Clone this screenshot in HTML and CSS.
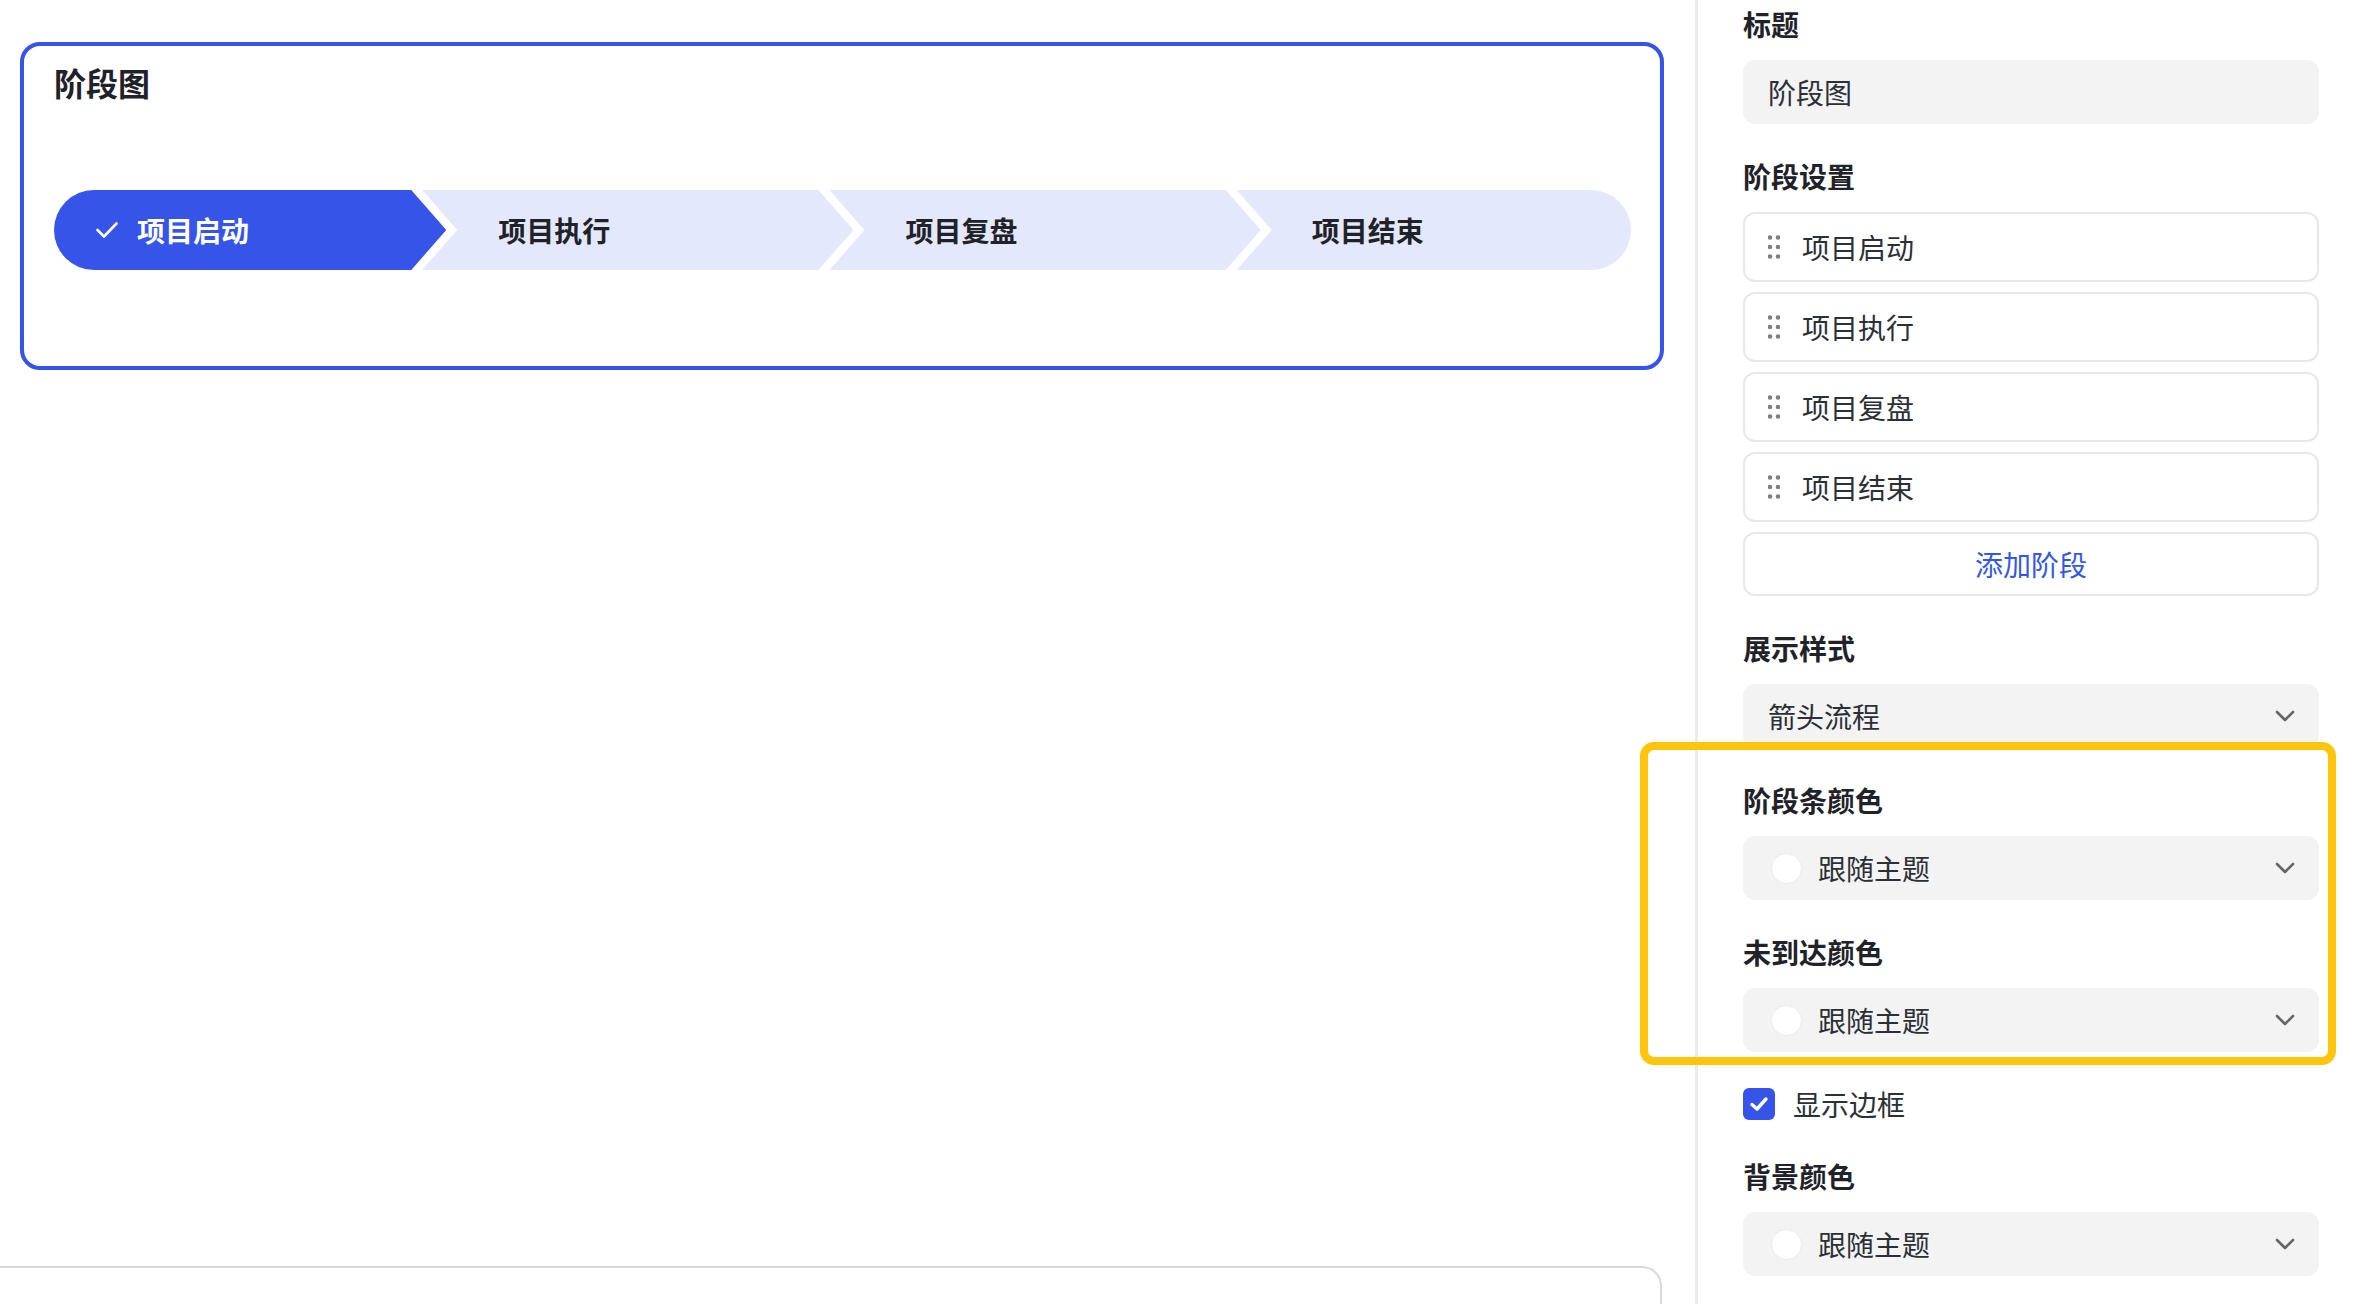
FILE: index.html
```html
<!DOCTYPE html>
<html lang="zh-CN">
<head>
<meta charset="utf-8">
<title>阶段图</title>
<link rel="stylesheet" href="styles.css">
</head>
<body>
<div class="app">
  <main class="canvas">
    <section class="card">
      <h2 class="card-title">阶段图</h2>
      <div class="stages">
        <div class="stage stage-first">
          <svg class="check" viewBox="0 0 22 16" width="22" height="16"><polyline points="1.5,8 8,14.5 20.5,1.5" fill="none" stroke="#fff" stroke-width="2.6" stroke-linecap="round" stroke-linejoin="round"/></svg>
          <span class="stage-text">项目启动</span>
        </div>
        <div class="stage stage-mid"><span class="stage-text">项目执行</span></div>
        <div class="stage stage-mid"><span class="stage-text">项目复盘</span></div>
        <div class="stage stage-last"><span class="stage-text">项目结束</span></div>
      </div>
    </section>
    <section class="card-next"></section>
  </main>

  <aside class="panel">
    <div class="field-label">标题</div>
    <div class="input">阶段图</div>

    <div class="field-label">阶段设置</div>
    <div class="stage-list">
      <div class="stage-item">
        <svg class="handle" viewBox="0 0 12 24" width="12" height="24"><circle cx="2" cy="2.5" r="2.3"/><circle cx="10" cy="2.5" r="2.3"/><circle cx="2" cy="12" r="2.3"/><circle cx="10" cy="12" r="2.3"/><circle cx="2" cy="21.5" r="2.3"/><circle cx="10" cy="21.5" r="2.3"/></svg>
        <span>项目启动</span>
      </div>
      <div class="stage-item">
        <svg class="handle" viewBox="0 0 12 24" width="12" height="24"><circle cx="2" cy="2.5" r="2.3"/><circle cx="10" cy="2.5" r="2.3"/><circle cx="2" cy="12" r="2.3"/><circle cx="10" cy="12" r="2.3"/><circle cx="2" cy="21.5" r="2.3"/><circle cx="10" cy="21.5" r="2.3"/></svg>
        <span>项目执行</span>
      </div>
      <div class="stage-item">
        <svg class="handle" viewBox="0 0 12 24" width="12" height="24"><circle cx="2" cy="2.5" r="2.3"/><circle cx="10" cy="2.5" r="2.3"/><circle cx="2" cy="12" r="2.3"/><circle cx="10" cy="12" r="2.3"/><circle cx="2" cy="21.5" r="2.3"/><circle cx="10" cy="21.5" r="2.3"/></svg>
        <span>项目复盘</span>
      </div>
      <div class="stage-item">
        <svg class="handle" viewBox="0 0 12 24" width="12" height="24"><circle cx="2" cy="2.5" r="2.3"/><circle cx="10" cy="2.5" r="2.3"/><circle cx="2" cy="12" r="2.3"/><circle cx="10" cy="12" r="2.3"/><circle cx="2" cy="21.5" r="2.3"/><circle cx="10" cy="21.5" r="2.3"/></svg>
        <span>项目结束</span>
      </div>
      <div class="add-btn">添加阶段</div>
    </div>

    <div class="field-label">展示样式</div>
    <div class="input select">
      <span class="select-text">箭头流程</span>
      <svg class="chevron" viewBox="0 0 20 12" width="20" height="12"><polyline points="2,2 10,10 18,2" fill="none" stroke="#666" stroke-width="2.6" stroke-linecap="round" stroke-linejoin="round"/></svg>
    </div>

    <div class="field-label">阶段条颜色</div>
    <div class="input select color-select">
      <span class="swatch"></span>
      <span class="select-text">跟随主题</span>
      <svg class="chevron" viewBox="0 0 20 12" width="20" height="12"><polyline points="2,2 10,10 18,2" fill="none" stroke="#666" stroke-width="2.6" stroke-linecap="round" stroke-linejoin="round"/></svg>
    </div>

    <div class="field-label">未到达颜色</div>
    <div class="input select color-select">
      <span class="swatch"></span>
      <span class="select-text">跟随主题</span>
      <svg class="chevron" viewBox="0 0 20 12" width="20" height="12"><polyline points="2,2 10,10 18,2" fill="none" stroke="#666" stroke-width="2.6" stroke-linecap="round" stroke-linejoin="round"/></svg>
    </div>

    <label class="check-row">
      <span class="checkbox"><svg viewBox="0 0 20 16" width="20" height="16"><polyline points="3,8.5 8,13 17,3" fill="none" stroke="#fff" stroke-width="3.4" stroke-linecap="round" stroke-linejoin="round"/></svg></span>
      <span>显示边框</span>
    </label>

    <div class="field-label">背景颜色</div>
    <div class="input select color-select last">
      <span class="swatch"></span>
      <span class="select-text">跟随主题</span>
      <svg class="chevron" viewBox="0 0 20 12" width="20" height="12"><polyline points="2,2 10,10 18,2" fill="none" stroke="#666" stroke-width="2.6" stroke-linecap="round" stroke-linejoin="round"/></svg>
    </div>

    <div class="highlight"></div>
  </aside>
</div>
</body>
</html>
```

FILE: styles.css
```css
html, body {
  margin: 0;
  padding: 0;
  height: 100%;
  overflow: hidden;
  background: #ffffff;
}

body {
  font-family: "Noto Sans CJK SC", "Noto Sans", "Liberation Sans", sans-serif;
  color: #1f2329;
}

.app {
  display: flex;
  height: 1304px;
  overflow: hidden;
}

/* ---------- canvas ---------- */
.canvas {
  flex: 1 1 0;
  min-width: 0;
  padding: 42px 31px 0 20px;
  box-sizing: border-box;
  overflow: hidden;
}

.card {
  border: 4px solid #3654e8;
  border-radius: 20px;
  padding: 14px 29px 96px 30px;
  background: #fff;
}

.card-title {
  margin: 0;
  font-size: 32px;
  line-height: 44px;
  font-weight: 700;
  color: #1f2329;
}

.stages {
  display: flex;
  margin-top: 86px;
  height: 80px;
}

.stage {
  height: 80px;
  display: flex;
  align-items: center;
  background: #e4e8fc;
  box-sizing: border-box;
  font-size: 28px;
  font-weight: 600;
  color: #1f2329;
  min-width: 0;
}

.stage + .stage {
  margin-left: -24px;
}

.stage-first {
  flex: 0 1 393px;
  background: #3654e8;
  color: #fff;
  border-radius: 40px 0 0 40px;
  padding-left: 42px;
  clip-path: polygon(0 0, calc(100% - 35px) 0, 100% 50%, calc(100% - 35px) 100%, 0 100%);
}

.stage-mid {
  flex: 0 1 432px;
  padding-left: 76px;
  clip-path: polygon(0 0, calc(100% - 35px) 0, 100% 50%, calc(100% - 35px) 100%, 0 100%, 35px 50%);
}

.stage-last {
  flex: 1 1 395px;
  padding-left: 75px;
  border-radius: 0 40px 40px 0;
  clip-path: polygon(0 0, 100% 0, 100% 100%, 0 100%, 35px 50%);
}

.check {
  display: block;
  margin-right: 19px;
}

.stage-text {
  line-height: 40px;
}

.card-next {
  margin: 896px 2px 0 -40px;
  height: 40px;
  border: 2px solid #d9d9d9;
  border-bottom: none;
  border-radius: 20px 20px 0 0;
}

/* ---------- panel ---------- */
.panel {
  position: relative;
  width: 659px;
  flex: 0 0 659px;
  box-sizing: border-box;
  border-left: 3px solid #ebebeb;
  padding: 4px 35px 0 45px;
  display: flex;
  flex-direction: column;
}

.field-label {
  height: 40px;
  line-height: 40px;
  font-size: 28px;
  font-weight: 600;
  color: #1f2329;
  margin-bottom: 16px;
}

.input {
  height: 64px;
  flex: 0 0 64px;
  box-sizing: border-box;
  background: #f3f3f3;
  border-radius: 12px;
  padding: 0 24px 0 25px;
  display: flex;
  align-items: center;
  font-size: 28px;
  color: #2b2f36;
  margin-bottom: 32px;
}

.input.last {
  margin-bottom: 0;
}

.select-text {
  flex: 1 1 auto;
}

.chevron {
  display: block;
}

.color-select {
  padding-left: 28px;
}

.swatch {
  width: 31px;
  height: 31px;
  box-sizing: border-box;
  border-radius: 50%;
  background: #fff;
  border: 1.5px solid #ebebeb;
  margin-right: 16px;
  flex: 0 0 auto;
}

.stage-list {
  display: flex;
  flex-direction: column;
  gap: 10px;
  margin-bottom: 32px;
}

.stage-item {
  height: 70px;
  box-sizing: border-box;
  border: 2px solid #e8e8e8;
  border-radius: 12px;
  display: flex;
  align-items: center;
  padding-left: 23px;
  font-size: 28px;
  color: #2b2f36;
}

.handle {
  display: block;
  fill: #7f7f7f;
  margin-right: 22px;
}

.add-btn {
  height: 64px;
  box-sizing: border-box;
  border: 2px solid #e8e8e8;
  border-radius: 12px;
  display: flex;
  align-items: center;
  justify-content: center;
  font-size: 28px;
  color: #3456e8;
}

.check-row {
  height: 40px;
  display: flex;
  align-items: center;
  font-size: 28px;
  color: #2b2f36;
  margin-bottom: 32px;
}

.checkbox {
  width: 32px;
  height: 32px;
  border-radius: 6px;
  background: #3654e8;
  display: flex;
  align-items: center;
  justify-content: center;
  margin-right: 18px;
}

.checkbox svg {
  display: block;
}

.highlight {
  position: absolute;
  left: -58px;
  top: 742px;
  width: 696px;
  height: 323px;
  box-sizing: border-box;
  border: 8px solid #ffc50c;
  border-radius: 14px;
  pointer-events: none;
}
```
